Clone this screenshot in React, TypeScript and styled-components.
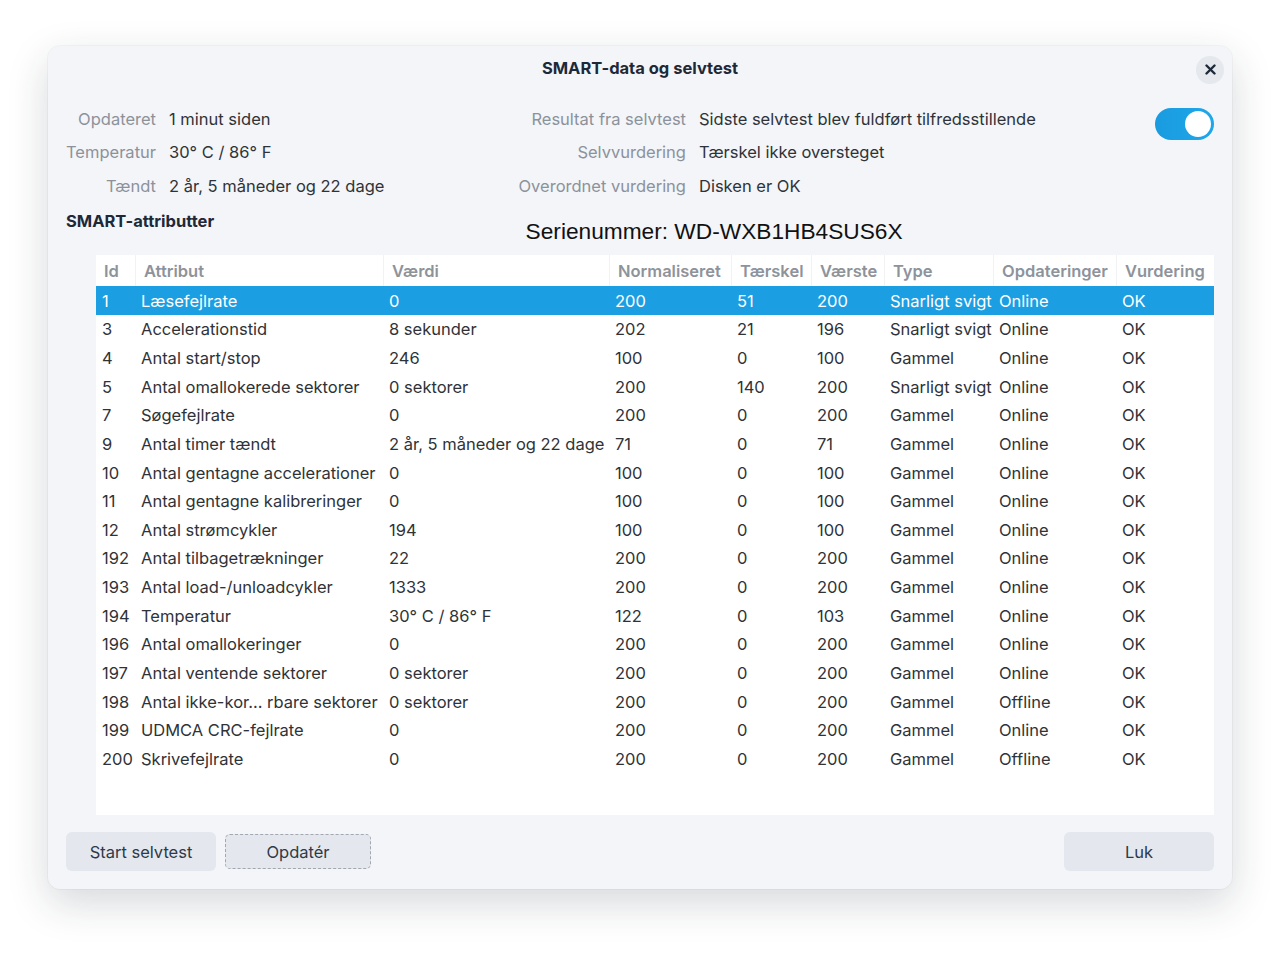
import React, { FC } from 'react'
import styled, { createGlobalStyle } from 'styled-components'

const GlobalStyle = createGlobalStyle`
  html, body {
    margin: 0;
    padding: 0;
    background: #ffffff;
  }
  body {
    font-family: Inter, "Noto Sans", "DejaVu Sans", sans-serif;
    font-size: 16.5px;
    color: #2f3338;
  }
`

const Page = styled.div`
  width: 1280px;
  height: 960px;
  padding: 46px 48px 0;
  box-sizing: border-box;
`

const Dialog = styled.div`
  width: 1184px;
  height: 843px;
  box-sizing: border-box;
  background: #f3f5f8;
  border-radius: 12px;
  box-shadow: 0 14px 40px rgba(30, 40, 50, 0.18), 0 0 0 1px rgba(0, 0, 0, 0.03);
  display: flex;
  flex-direction: column;
  padding: 0 18px 18px;
`

const TitleBar = styled.div`
  display: grid;
  grid-template-columns: 1fr auto 1fr;
  align-items: center;
  height: 44px;
  margin: 0 -10px 0 -10px;
`

const Title = styled.div`
  grid-column: 2;
  font-weight: 700;
  color: #1d2939;
`

const CloseButton = styled.button`
  grid-column: 3;
  justify-self: end;
  width: 28px;
  height: 28px;
  border: none;
  border-radius: 50%;
  background: #e5e8ec;
  display: flex;
  align-items: center;
  justify-content: center;
  padding: 0;
  margin-top: 4px;
`

const InfoGrid = styled.div`
  display: grid;
  grid-template-columns: 90px 336px 168px 1fr 59px;
  grid-auto-rows: 33.5px;
  column-gap: 13px;
  align-items: center;
  padding-top: 12px;
`

const Label = styled.div`
  text-align: right;
  color: #8c929b;
  white-space: nowrap;
`

const Value = styled.div`
  color: #2f3338;
  white-space: nowrap;
`

const Toggle = styled.div`
  grid-column: 5;
  grid-row: 1;
  align-self: start;
  margin-top: 6px;
  width: 59px;
  height: 32px;
  border-radius: 16px;
  background: linear-gradient(90deg, #1a9be0, #1fa7ea);
  display: flex;
  align-items: center;
  justify-content: flex-end;
  padding: 0 3px;
  box-sizing: border-box;
`

const Knob = styled.div`
  width: 26px;
  height: 26px;
  border-radius: 50%;
  background: #ffffff;
`

const AttrHeader = styled.div`
  display: flex;
  align-items: flex-start;
  padding-top: 9px;
  height: 53px;
  box-sizing: border-box;
`

const SectionTitle = styled.div`
  font-weight: 700;
  color: #1d2939;
  line-height: 20px;
`

const Serial = styled.div`
  flex: 1;
  text-align: center;
  font-family: "Liberation Sans", Arial, sans-serif;
  font-size: 22.7px;
  line-height: 26px;
  color: #111;
  margin-top: 7px;
`

const TablePanel = styled.div`
  margin-left: 30px;
  height: 560px;
  background: #ffffff;
  overflow: hidden;
`

const cols = '39px 248px 226px 122px 80px 73px 109px 123px 98px'

const HeaderRow = styled.div`
  display: grid;
  grid-template-columns: ${cols};
  height: 31px;
  align-items: center;
`

const HeaderCell = styled.div<{ $first?: boolean }>`
  height: 100%;
  display: flex;
  align-items: center;
  padding-left: 8px;
  font-weight: 600;
  color: #8e939b;
  white-space: nowrap;
  border-left: ${p => (p.$first ? 'none' : '1px solid #f0f2f4')};
`

const Row = styled.div<{ $selected?: boolean }>`
  display: grid;
  grid-template-columns: ${cols};
  height: 28.625px;
  align-items: center;
  background: ${p => (p.$selected ? '#1b9ee2' : 'transparent')};
  color: ${p => (p.$selected ? '#ffffff' : '#2f3338')};
`

const Cell = styled.div`
  padding-left: 6px;
  white-space: nowrap;
  overflow: hidden;
`

const Footer = styled.div`
  display: flex;
  align-items: center;
  margin-top: 17px;
  gap: 9px;
`

const Button = styled.button<{ $focused?: boolean }>`
  font-family: Inter, "Noto Sans", sans-serif;
  font-size: 16.5px;
  color: #2f3a48;
  background: #e4e8ee;
  border: ${p => (p.$focused ? '1px dashed #a3a8b0' : 'none')};
  border-radius: ${p => (p.$focused ? '5px' : '6px')};
  width: ${p => (p.$focused ? '146px' : '150px')};
  height: ${p => (p.$focused ? '35px' : '39px')};
  padding: 0;
`

const Spacer = styled.div`
  flex: 1;
`

const headers = ['Id', 'Attribut', 'Værdi', 'Normaliseret', 'Tærskel', 'Værste', 'Type', 'Opdateringer', 'Vurdering']

const rows: string[][] = [
  ['1', 'Læsefejlrate', '0', '200', '51', '200', 'Snarligt svigt', 'Online', 'OK'],
  ['3', 'Accelerationstid', '8 sekunder', '202', '21', '196', 'Snarligt svigt', 'Online', 'OK'],
  ['4', 'Antal start/stop', '246', '100', '0', '100', 'Gammel', 'Online', 'OK'],
  ['5', 'Antal omallokerede sektorer', '0 sektorer', '200', '140', '200', 'Snarligt svigt', 'Online', 'OK'],
  ['7', 'Søgefejlrate', '0', '200', '0', '200', 'Gammel', 'Online', 'OK'],
  ['9', 'Antal timer tændt', '2 år, 5 måneder og 22 dage', '71', '0', '71', 'Gammel', 'Online', 'OK'],
  ['10', 'Antal gentagne accelerationer', '0', '100', '0', '100', 'Gammel', 'Online', 'OK'],
  ['11', 'Antal gentagne kalibreringer', '0', '100', '0', '100', 'Gammel', 'Online', 'OK'],
  ['12', 'Antal strømcykler', '194', '100', '0', '100', 'Gammel', 'Online', 'OK'],
  ['192', 'Antal tilbagetrækninger', '22', '200', '0', '200', 'Gammel', 'Online', 'OK'],
  ['193', 'Antal load-/unloadcykler', '1333', '200', '0', '200', 'Gammel', 'Online', 'OK'],
  ['194', 'Temperatur', '30° C / 86° F', '122', '0', '103', 'Gammel', 'Online', 'OK'],
  ['196', 'Antal omallokeringer', '0', '200', '0', '200', 'Gammel', 'Online', 'OK'],
  ['197', 'Antal ventende sektorer', '0 sektorer', '200', '0', '200', 'Gammel', 'Online', 'OK'],
  ['198', 'Antal ikke-kor… rbare sektorer', '0 sektorer', '200', '0', '200', 'Gammel', 'Offline', 'OK'],
  ['199', 'UDMCA CRC-fejlrate', '0', '200', '0', '200', 'Gammel', 'Online', 'OK'],
  ['200', 'Skrivefejlrate', '0', '200', '0', '200', 'Gammel', 'Offline', 'OK'],
]

const App: FC = () => {
  return (
    <Page>
      <GlobalStyle />
      <Dialog>
        <TitleBar>
          <Title>SMART-data og selvtest</Title>
          <CloseButton aria-label="Luk">
            <svg width="11" height="11" viewBox="0 0 11 11">
              <path d="M1.5 1.5 L9.5 9.5 M9.5 1.5 L1.5 9.5" stroke="#1d2939" strokeWidth="2.4" strokeLinecap="round" />
            </svg>
          </CloseButton>
        </TitleBar>

        <InfoGrid>
          <Label>Opdateret</Label>
          <Value>1 minut siden</Value>
          <Label>Resultat fra selvtest</Label>
          <Value>Sidste selvtest blev fuldført tilfredsstillende</Value>
          <Toggle>
            <Knob />
          </Toggle>
          <Label>Temperatur</Label>
          <Value>30° C / 86° F</Value>
          <Label>Selvvurdering</Label>
          <Value>Tærskel ikke oversteget</Value>
          <div />
          <Label>Tændt</Label>
          <Value>2 år, 5 måneder og 22 dage</Value>
          <Label>Overordnet vurdering</Label>
          <Value>Disken er OK</Value>
          <div />
        </InfoGrid>

        <AttrHeader>
          <SectionTitle>SMART-attributter</SectionTitle>
          <Serial>Serienummer: WD-WXB1HB4SUS6X</Serial>
        </AttrHeader>

        <TablePanel>
          <HeaderRow>
            {headers.map((h, i) => (
              <HeaderCell key={h} $first={i === 0}>{h}</HeaderCell>
            ))}
          </HeaderRow>
          {rows.map((r, i) => (
            <Row key={r[0]} $selected={i === 0}>
              {r.map((c, j) => (
                <Cell key={j}>{c}</Cell>
              ))}
            </Row>
          ))}
        </TablePanel>

        <Footer>
          <Button>Start selvtest</Button>
          <Button $focused>Opdatér</Button>
          <Spacer />
          <Button>Luk</Button>
        </Footer>
      </Dialog>
    </Page>
  )
}

export default App
